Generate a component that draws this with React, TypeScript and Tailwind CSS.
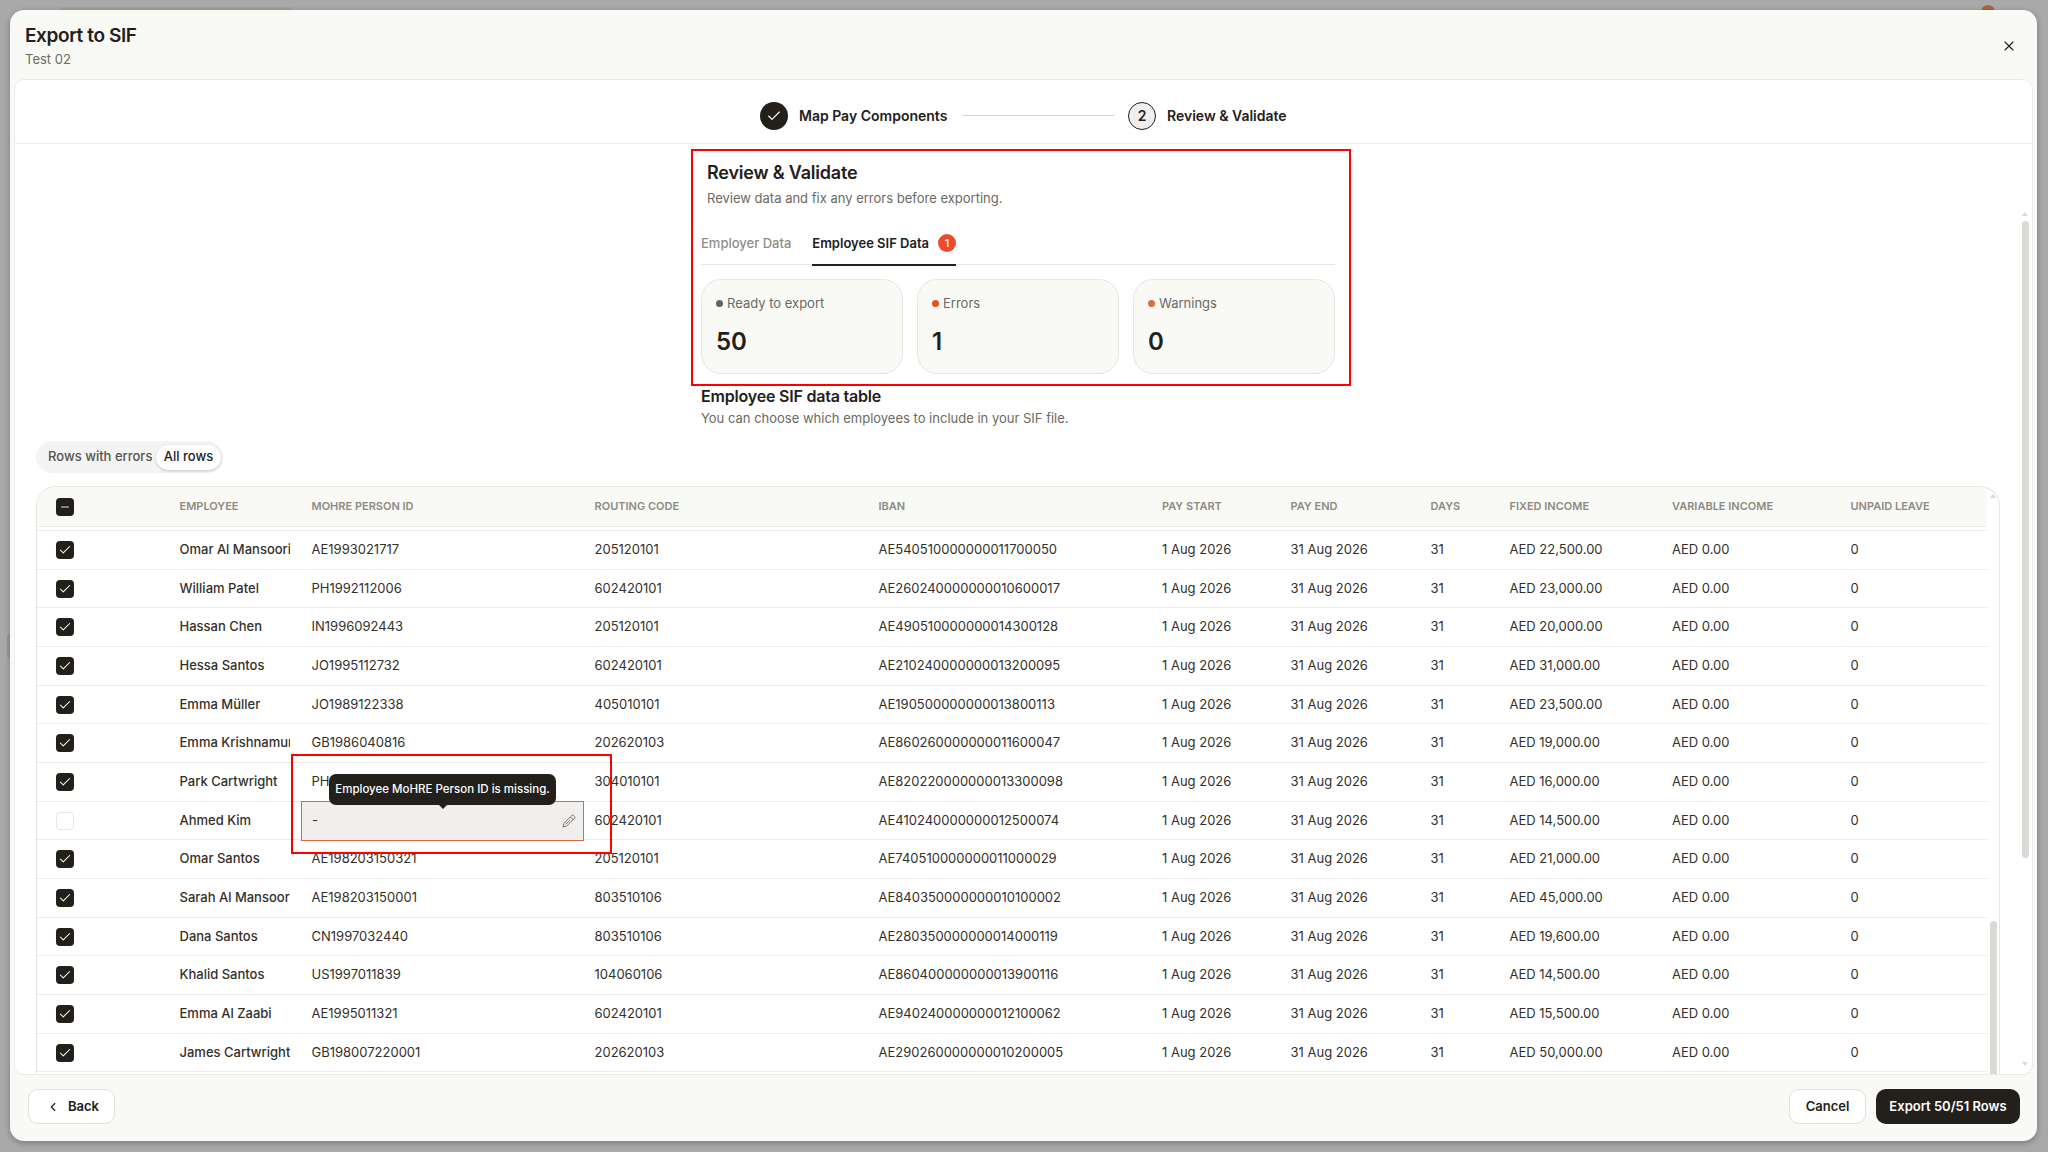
import { useState } from "react";
import { Check, ChevronLeft, Minus, X } from "lucide-react";

type Row = {
  name: string;
  personId: string;
  routing: string;
  iban: string;
  fixed: string;
};

const rows: Row[] = [
  { name: "Omar Al Mansoori", personId: "AE1993021717", routing: "205120101", iban: "AE540510000000011700050", fixed: "22,500.00" },
  { name: "William Patel", personId: "PH1992112006", routing: "602420101", iban: "AE260240000000010600017", fixed: "23,000.00" },
  { name: "Hassan Chen", personId: "IN1996092443", routing: "205120101", iban: "AE490510000000014300128", fixed: "20,000.00" },
  { name: "Hessa Santos", personId: "JO1995112732", routing: "602420101", iban: "AE210240000000013200095", fixed: "31,000.00" },
  { name: "Emma Müller", personId: "JO1989122338", routing: "405010101", iban: "AE190500000000013800113", fixed: "23,500.00" },
  { name: "Emma Krishnamurthy", personId: "GB1986040816", routing: "202620103", iban: "AE860260000000011600047", fixed: "19,000.00" },
  { name: "Park Cartwright", personId: "PH1990051228", routing: "304010101", iban: "AE820220000000013300098", fixed: "16,000.00" },
  { name: "Ahmed Kim", personId: "", routing: "602420101", iban: "AE410240000000012500074", fixed: "14,500.00" },
  { name: "Omar Santos", personId: "AE198203150321", routing: "205120101", iban: "AE740510000000011000029", fixed: "21,000.00" },
  { name: "Sarah Al Mansoori", personId: "AE198203150001", routing: "803510106", iban: "AE840350000000010100002", fixed: "45,000.00" },
  { name: "Dana Santos", personId: "CN1997032440", routing: "803510106", iban: "AE280350000000014000119", fixed: "19,600.00" },
  { name: "Khalid Santos", personId: "US1997011839", routing: "104060106", iban: "AE860400000000013900116", fixed: "14,500.00" },
  { name: "Emma Al Zaabi", personId: "AE1995011321", routing: "602420101", iban: "AE940240000000012100062", fixed: "15,500.00" },
  { name: "James Cartwright", personId: "GB198007220001", routing: "202620103", iban: "AE290260000000010200005", fixed: "50,000.00" },
];

const headings = [
  "Employee",
  "MoHRE Person ID",
  "Routing code",
  "IBAN",
  "Pay start",
  "Pay end",
  "Days",
  "Fixed income",
  "Variable income",
  "Unpaid leave",
];

const gridCols =
  "grid grid-cols-[132px_132px_283px_284px_283.5px_128.5px_140px_79px_162.5px_178.5px_147px]";

const stats = [
  { label: "Ready to export", value: 50, dot: "bg-[#64635d]" },
  { label: "Errors", value: 1, dot: "bg-[#ee4b2b]" },
  { label: "Warnings", value: 0, dot: "bg-[#e56a3c]" },
];

const Checkbox = ({ state }: { state: "on" | "off" | "mixed" }) => {
  if (state === "off") {
    return <span className="block size-[18px] rounded border border-[#e6e6e3] bg-white" />;
  }
  return (
    <span className="flex size-[18px] items-center justify-center rounded bg-[#23201b] text-white">
      {state === "on" ? (
        <Check className="size-[14px]" strokeWidth={1.8} />
      ) : (
        <Minus className="size-3" strokeWidth={1.8} />
      )}
    </span>
  );
};

const PencilIcon = () => (
  <svg
    className="size-[14px] text-[#77756f]"
    viewBox="0 0 14 14"
    fill="none"
    stroke="currentColor"
    strokeWidth="1"
    strokeLinejoin="round"
  >
    <path d="M1 13l.9-3.6 7.9-7.9a1.3 1.3 0 0 1 1.9 0l.8.8a1.3 1.3 0 0 1 0 1.9L4.600 12.100 1 13z" />
    <path d="M8.400 2.900l2.700 2.700M3.700 10.300l4.200-4.200" />
  </svg>
);

const MissingIdCell = () => (
  <div className="relative -mt-px flex h-[40px] items-center justify-between border border-[#e2673f] bg-[#f0efed] pl-[10px] pr-[7px]">
    <span>-</span>
    <PencilIcon />
    <div className="absolute bottom-[35px] left-[27px] z-10 flex h-[31px] w-[227px] items-center justify-center rounded-[7px] bg-[#23201b] text-[11.5px] font-medium text-white">
      Employee MoHRE Person ID is missing.
      <span className="absolute -bottom-1 left-1/2 size-0 -translate-x-1/2 border-x-[5px] border-t-[5px] border-x-transparent border-t-[#23201b]" />
    </div>
    <div className="pointer-events-none absolute -left-[11px] -top-[48px] z-20 h-[100px] w-[321px] border-2 border-[#ff0000]" />
  </div>
);

const App = () => {
  const [filter, setFilter] = useState("all");

  return (
    <div className="relative h-[1152px] w-[2048px] overflow-hidden bg-[#a9a9a9] p-[10px] pr-[11px] pb-[11px] font-['Inter',sans-serif] text-[#23201b]">
      <div className="absolute left-[60px] top-[7px] h-2 w-[232px] rounded-t bg-[#9e9e9b]" />
      <div className="absolute left-[1981px] top-[5px] size-[14px] rounded-full bg-[#a8663c]" />
      <div className="absolute left-[7px] top-[634px] h-[25px] w-3 rounded bg-[#999]" />

      <div className="relative flex h-full flex-col rounded-[14px] bg-[#f9faf6] px-1 shadow-[0_2px_6px_rgba(0,0,0,0.28)]">
        <header className="flex h-[69px] shrink-0 justify-between pl-[11px] pr-[16px]">
          <div className="pt-[14px]">
            <h1 className="text-[19px] font-semibold leading-6 tracking-[-0.4px]">
              Export to SIF
            </h1>
            <p className="mt-[2px] text-[13px] leading-[18px] text-[#6b6963]">Test 02</p>
          </div>
          <button className="mt-[28px] size-4" aria-label="Close">
            <X className="size-4" strokeWidth={1.7} />
          </button>
        </header>

        <main className="flex h-[996px] shrink-0 flex-col overflow-hidden rounded-[10px] border border-[#ebebe8] bg-white">
          <div className="flex h-[64px] shrink-0 items-center border-b border-[#ebebe8] pb-[-1px] pl-[745px] pt-2 text-[14px] font-semibold">
            <span className="flex size-7 items-center justify-center rounded-full bg-[#23201b] text-white">
              <Check className="size-4" strokeWidth={1.7} />
            </span>
            <span className="ml-[11px] w-[152px]">Map Pay Components</span>
            <span className="ml-[11px] mr-[14px] h-px w-[152px] bg-[#d5d5d2]" />
            <span className="flex size-7 items-center justify-center rounded-full border-[1.5px] border-[#23201b] bg-[#f0efed]">
              2
            </span>
            <span className="ml-[11px]">Review &amp; Validate</span>
          </div>

          <div className="flex min-h-0 flex-1">
            <div className="flex min-w-0 flex-1 flex-col pl-[21px]">
              <section className="relative ml-[655px] mt-[5px] h-[237px] w-[660px] shrink-0 border-2 border-[#ff0000] px-2">
                <h2 className="mt-[10px] pl-[6px] text-[18px] font-semibold leading-6 tracking-[-0.2px]">
                  Review &amp; Validate
                </h2>
                <p className="mt-1 pl-[6px] text-[13px] leading-[18px] text-[#6b6963]">
                  Review data and fix any errors before exporting.
                </p>
                <div className="mt-[26px] flex h-[32px] w-[634px] gap-[21px] border-b border-[#e6e6e3] text-[13px] font-medium leading-[20px]">
                  <span className="text-[#908e88]">Employer Data</span>
                  <span className="flex h-[33px] items-start gap-[9px] border-b-2 border-[#23201b] font-semibold">
                    Employee SIF Data
                    <span className="mt-px flex size-[18px] items-center justify-center rounded-full bg-[#ee4b2b] text-[11px] font-medium text-white">
                      1
                    </span>
                  </span>
                </div>
                <div className="mt-[14px] flex w-[634px] gap-[14px]">
                  {stats.map((s) => (
                    <div
                      key={s.label}
                      className="h-[95px] flex-1 rounded-[20px] border border-[#e6e6e3] bg-[#f9faf6] pl-[14px] pt-[14px]"
                    >
                      <div className="flex items-center gap-1 text-[13px] leading-[18px] text-[#6b6963]">
                        <span className={`size-[7px] rounded-full ${s.dot}`} />
                        {s.label}
                      </div>
                      <div className="mt-[14px] text-[24px] font-semibold leading-8">
                        {s.value}
                      </div>
                    </div>
                  ))}
                </div>
              </section>

              <div className="ml-[665px] h-[55px] shrink-0">
                <h3 className="text-[16px] font-semibold leading-[21px] tracking-[-0.2px]">
                  Employee SIF data table
                </h3>
                <p className="mt-[2px] text-[13px] leading-[18px] text-[#6b6963]">
                  You can choose which employees to include in your SIF file.
                </p>
              </div>

              <div className="flex h-8 w-[187px] shrink-0 items-center rounded-full bg-[#f4f4f4] pl-3 text-[13px] font-medium">
                <button className="w-[108px] text-left text-[#55534e]" onClick={() => setFilter("errors")}>
                  Rows with errors
                </button>
                <button
                  className="h-[25px] w-[65px] rounded-full bg-white shadow-[0_1px_3px_rgba(0,0,0,0.2)]"
                  aria-pressed={filter === "all"}
                  onClick={() => setFilter("all")}
                >
                  All rows
                </button>
              </div>

              <div className="mt-[13px] flex min-h-0 w-[1964px] flex-1 overflow-hidden rounded-t-[20px] border border-b-0 border-[#e6e6e3]">
                <div className="w-[1950px] shrink-0">
                  <div className={`${gridCols} h-10 items-center border-b border-[#ebebe8] bg-[#f9faf6] text-[11px] font-semibold uppercase text-[#8d8a82]`}>
                    <div className="pl-[19px]">
                      <Checkbox state="mixed" />
                    </div>
                    {headings.map((h) => (
                      <div key={h} className="pl-[10.5px]">
                        {h}
                      </div>
                    ))}
                  </div>
                  <div className="h-1 border-b border-[#ebebe8]" />
                  {rows.map((r) => (
                    <div
                      key={r.name}
                      className={`${gridCols} h-[38.68px] items-center border-b border-[#ebebe8] text-[13px] text-[#33302b]`}
                    >
                      <div className="pl-[19px]">
                        <Checkbox state={r.personId ? "on" : "off"} />
                      </div>
                      <div className="mr-[11px] overflow-hidden whitespace-nowrap pl-[10.5px] font-medium">
                        {r.name}
                      </div>
                      {r.personId ? <div className="pl-[10.5px]">{r.personId}</div> : <MissingIdCell />}
                      <div className="pl-[10.5px]">{r.routing}</div>
                      <div className="pl-[10.5px]">{r.iban}</div>
                      <div className="pl-[10.5px]">1 Aug 2026</div>
                      <div className="pl-[10.5px]">31 Aug 2026</div>
                      <div className="pl-[10.5px]">31</div>
                      <div className="pl-[10.5px]">AED {r.fixed}</div>
                      <div className="pl-[10.5px]">AED 0.00</div>
                      <div className="pl-[10.5px]">0</div>
                    </div>
                  ))}
                </div>
                <div className="flex w-3 shrink-0 flex-col items-center justify-between pt-[7px]">
                  <span className="size-0 border-x-[3.5px] border-b-4 border-x-transparent border-b-[#d9d9d6]" />
                  <span className="h-[153px] w-[7px] rounded-t-full bg-[#d9d9d6]" />
                </div>
              </div>
            </div>

            <div className="flex w-[14px] shrink-0 flex-col items-center pb-2 pt-[68px]">
              <span className="size-0 border-x-[3.5px] border-b-4 border-x-transparent border-b-[#d9d9d6]" />
              <span className="mt-[5px] h-[637px] w-[7px] rounded-full bg-[#d9d9d6]" />
              <span className="mt-auto size-0 border-x-[3.5px] border-t-4 border-x-transparent border-t-[#d9d9d6]" />
            </div>
          </div>
        </main>

        <footer className="flex flex-1 items-start justify-between pl-[14px] pr-[13px] pt-[14px] text-[13px] font-semibold">
          <button className="flex h-[35px] w-[87px] items-center rounded-[10px] border border-[#e0e0dd] bg-white pl-[17px]">
            <ChevronLeft className="mr-[8px] size-[14px]" strokeWidth={2} />
            Back
          </button>
          <div className="flex gap-[10px]">
            <button className="h-[35px] w-[77px] rounded-[10px] border border-[#e0e0dd] bg-white">
              Cancel
            </button>
            <button className="h-[35px] w-[144px] rounded-[10px] bg-[#23201b] text-white">
              Export 50/51 Rows
            </button>
          </div>
        </footer>
      </div>
    </div>
  );
};

export default App;
